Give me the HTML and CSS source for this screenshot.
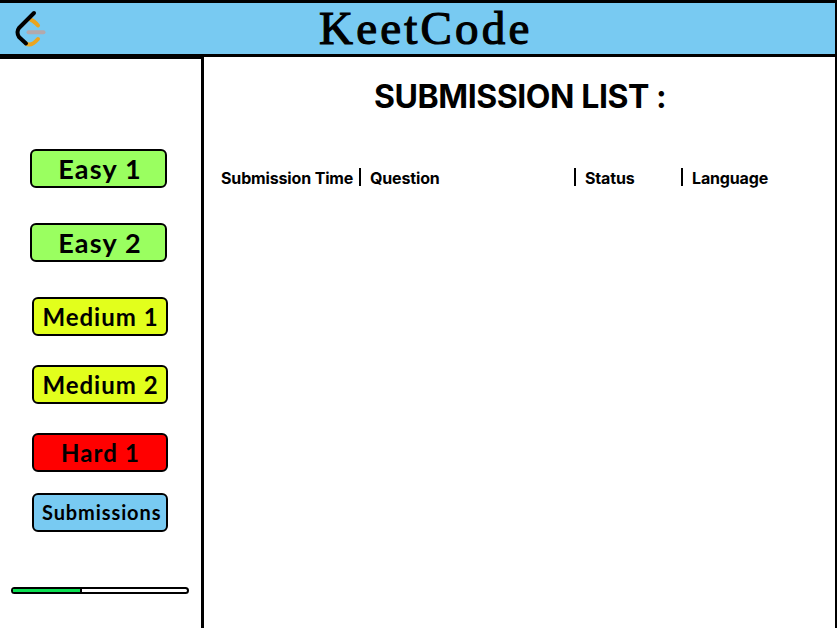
FILE: index.html
```html
<!DOCTYPE html>
<html lang="en">
<head>
<meta charset="utf-8">
<title>KeetCode</title>
<link rel="stylesheet" href="styles.css">
</head>
<body>
<header class="topbar">
  <svg class="logo" viewBox="0 0 100 51" width="100" height="51" fill="none" stroke-linecap="round" stroke-linejoin="round">
    <path stroke="#eba51f" stroke-width="4" d="M31 17Q34 18 38 22.500M26 40.500Q31 44 38 36"/>
    <path stroke="#b3a9ad" stroke-width="4" d="M28.500 29.300H43.500"/>
    <path stroke="#000" stroke-width="4" d="M34 10L19 25Q16 29 19 34L26 40.500"/>
  </svg>
  <h1 class="brand">KeetCode</h1>
</header>
<div class="layout">
  <aside class="sidebar">
    <nav class="nav">
      <a class="btn easy">Easy 1</a>
      <a class="btn easy second">Easy 2</a>
      <a class="btn medium">Medium 1</a>
      <a class="btn medium second">Medium 2</a>
      <a class="btn hard">Hard 1</a>
      <a class="btn submissions">Submissions</a>
    </nav>
    <div class="progress"><div class="fill"></div></div>
  </aside>
  <main class="content">
    <h2 class="heading">SUBMISSION LIST :</h2>
    <div class="columns">
      <span class="col">Submission Time</span>
      <span class="col divided">Question</span>
      <span class="col divided">Status</span>
      <span class="col divided">Language</span>
    </div>
  </main>
</div>
</body>
</html>
```
FILE: styles.css
```css
* { box-sizing: border-box; }
body {
  margin: 0;
  height: 628px;
  overflow: hidden;
  background: #fff;
  color: #000;
  font-family: Inter, "Liberation Sans", sans-serif;
}
.topbar {
  display: grid;
  grid-template-columns: 319px 1fr;
  width: 837px;
  height: 57px;
  border: solid #000;
  border-width: 3px 2px 3px 0;
  background: #78caf2;
}
.logo { display: block; }
.brand {
  margin: 0;
  font: 400 47px/50px "Liberation Serif", serif;
  letter-spacing: 3.2px;
  -webkit-text-stroke: 1.2px #000;
  white-space: nowrap;
}
.layout {
  display: grid;
  grid-template-columns: 204px 633px;
  height: 571px;
}
.sidebar {
  border-top: 2px solid #000;
  border-right: 3px solid #000;
  padding: 90px 0 0 11px;
}
.nav {
  display: flex;
  flex-direction: column;
  padding-left: 19px;
}
.btn {
  width: 137px;
  height: 39px;
  border: 2px solid #000;
  border-radius: 6px;
  font: 700 26px/36px Lato, sans-serif;
  text-align: center;
  white-space: nowrap;
}
.easy { background: #9aff60; font-size: 27px; letter-spacing: 1.2px; padding-left: 3px; }
.easy.second { margin-top: 35px; }
.medium, .hard, .submissions { width: 136px; margin-left: 2px; }
.medium { margin-top: 35px; background: #e2ff1c; font-size: 24px; letter-spacing: 1px; padding-left: 1px; }
.medium.second { margin-top: 29px; }
.hard { margin-top: 29px; background: #f00; font-size: 24px; letter-spacing: 1.1px; padding-left: 1px; }
.submissions { margin-top: 21px; background: #78caf2; font-size: 20px; line-height: 34px; letter-spacing: 0.9px; padding-left: 3px; text-align: left; padding-left: 8px; }
.progress {
  width: 178px;
  height: 7px;
  margin-top: 55px;
  border: 2px solid #000;
  border-radius: 4px;
  background: #fff;
}
.fill {
  width: 69px;
  height: 3px;
  border-right: 2px solid #000;
  background: #0be052;
}
.content { border-right: 2px solid #000; }
.heading {
  margin: 20px 0 0 170px;
  font-size: 32px;
  line-height: 40px;
  font-weight: 700;
  letter-spacing: -0.42px;
  white-space: nowrap;
}
.columns {
  display: grid;
  grid-template-columns: 138px 215px 107px 1fr;
  margin: 51px 0 0 17px;
}
.col {
  height: 18px;
  font-size: 16px;
  line-height: 20px;
  font-weight: 700;
  letter-spacing: -0.15px;
  white-space: nowrap;
}
.divided { padding-left: 9px; border-left: 2px solid #000; }
```
